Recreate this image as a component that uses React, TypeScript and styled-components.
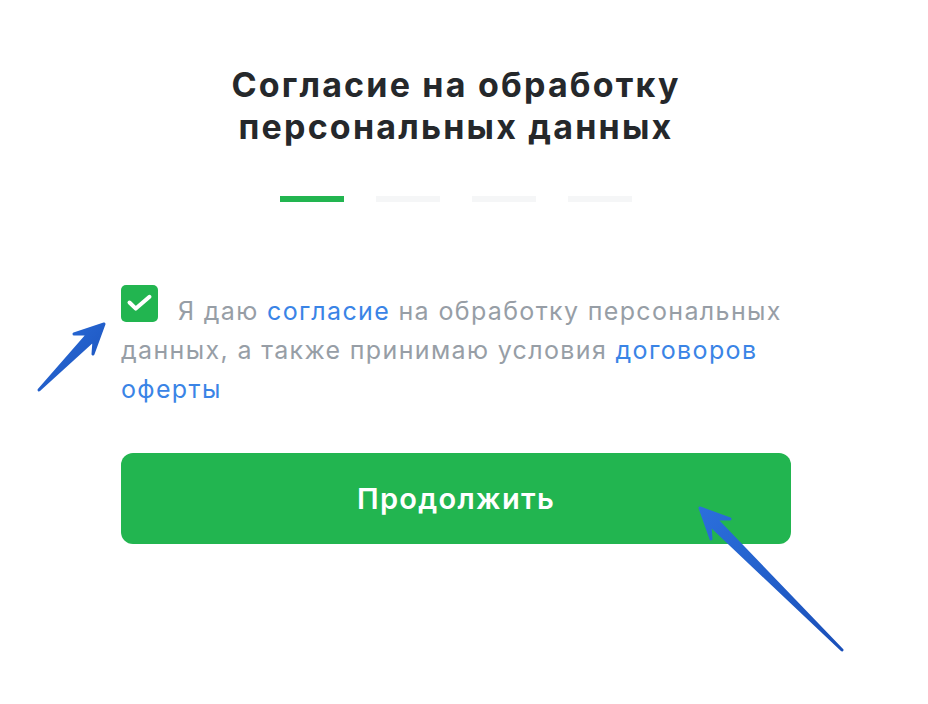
import styled, { createGlobalStyle } from 'styled-components';
import { useState } from 'react';

const GlobalStyle = createGlobalStyle`
  html, body {
    margin: 0;
    padding: 0;
    background: #ffffff;
  }
  body {
    font-family: Inter, "Open Sans", "Liberation Sans", sans-serif;
    -webkit-font-smoothing: antialiased;
  }
`;

const steps = [true, false, false, false];

const App = () => {
  const [agreed, setAgreed] = useState(true);

  return (
    <>
      <GlobalStyle />
      <Page>
        <Column>
          <Title>
            Согласие на обработку
            <br />
            персональных данных
          </Title>
          <Steps>
            {steps.map((active, i) => (
              <Step key={i} active={active} />
            ))}
          </Steps>
          <Consent>
            <Check checked={agreed} onClick={() => setAgreed(!agreed)}>
              {agreed && (
                <svg width="37" height="37" viewBox="0 0 37 37">
                  <path
                    d="M8.5 17.5 L14.8 23.6 L28.5 11.8"
                    fill="none"
                    stroke="#fff"
                    strokeWidth="4"
                    strokeLinecap="round"
                    strokeLinejoin="round"
                  />
                </svg>
              )}
            </Check>
            Я даю <Link>согласие</Link> на обработку персональных данных, а также принимаю условия{' '}
            <Link>договоров оферты</Link>
          </Consent>
          <ContinueButton disabled={!agreed}>Продолжить</ContinueButton>
        </Column>
        <Overlay width="928" height="704" viewBox="0 0 928 704">
          <defs>
            <linearGradient id="arrowBlue" x1="0" y1="0" x2="1" y2="1">
              <stop offset="0" stopColor="#2b6fdc" />
              <stop offset="1" stopColor="#1a4fb8" />
            </linearGradient>
          </defs>
          <path
            d="M104 324 L93 354 L94 340 L39 390 L88 334 L74 334 Z"
            fill="url(#arrowBlue)"
            stroke="url(#arrowBlue)"
            strokeWidth="3"
            strokeLinejoin="round"
          />
          <path
            d="M700 508 L730 519 L716 519 L842 650 L710 525 L711 539 Z"
            fill="url(#arrowBlue)"
            stroke="url(#arrowBlue)"
            strokeWidth="3"
            strokeLinejoin="round"
          />
        </Overlay>
      </Page>
    </>
  );
};

export default App;

const Page = styled.div`
  position: relative;
  width: 928px;
  height: 704px;
  overflow: hidden;
`;

const Column = styled.div`
  width: 670px;
  margin-left: 121px;
  padding-top: 64px;
  display: flex;
  flex-direction: column;
`;

const Title = styled.h1`
  margin: 0;
  text-align: center;
  font-size: 34px;
  line-height: 42px;
  font-weight: 700;
  color: #25282b;
  letter-spacing: 2.2px;
`;

const Steps = styled.div`
  display: flex;
  justify-content: center;
  gap: 32px;
  margin-top: 48px;
`;

const Step = styled.div<{ active: boolean }>`
  width: 64px;
  height: 6px;
  background: ${({ active }) => (active ? '#22b550' : '#f5f6f7')};
`;

const Consent = styled.p`
  margin: 90px 0 0;
  font-size: 25px;
  line-height: 39px;
  letter-spacing: 1.35px;
  color: #979ea6;
`;

const Check = styled.span<{ checked: boolean }>`
  float: left;
  width: 37px;
  height: 37px;
  margin: -7px 20px 0 0;
  border-radius: 5px;
  background: ${({ checked }) => (checked ? '#22b550' : '#ffffff')};
  border: ${({ checked }) => (checked ? 'none' : '2px solid #c9ced4')};
  box-sizing: border-box;
  cursor: pointer;
  svg {
    display: block;
  }
`;

const Link = styled.a`
  color: #3a84e6;
  text-decoration: none;
  cursor: pointer;
`;

const ContinueButton = styled.button`
  margin-top: 44px;
  height: 91px;
  border: none;
  border-radius: 12px;
  background: #22b550;
  color: #ffffff;
  font-family: inherit;
  font-size: 29px;
  font-weight: 600;
  letter-spacing: 1.3px;
  cursor: pointer;
`;

const Overlay = styled.svg`
  position: absolute;
  left: 0;
  top: 0;
  pointer-events: none;
`;
